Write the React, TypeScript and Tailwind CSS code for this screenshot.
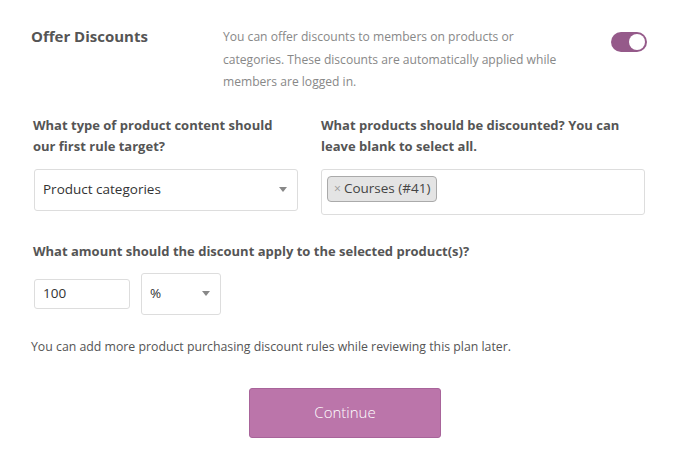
import React from 'react';

function Caret() {
  return (
    <svg width="8" height="5" viewBox="0 0 8 5" className="shrink-0">
      <path d="M0 0h8L4 5z" fill="#888" />
    </svg>
  );
}

export default function App() {
  const font = { fontFamily: '"Open Sans", "Noto Sans", sans-serif' };

  return (
    <div className="w-[698px] h-[471px] bg-white text-[#555]" style={font}>
      <div className="pl-[31px] pr-[51px] pt-[24px]">
        {/* toggle row */}
        <div className="flex items-start">
          <h2 className="w-[192px] text-[15px] font-bold leading-[22px] text-[#555] pt-[1px]">Offer Discounts</h2>
          <p className="w-[350px] text-[12.1px] leading-[22.5px] text-[#888] pt-[2px]">
            You can offer discounts to members on products or categories. These discounts are automatically applied
            while members are logged in.
          </p>
          <div className="ml-auto mt-[8px] w-[36px] h-[20px] rounded-full bg-[#955a8a] flex items-center justify-end pr-[2px]">
            <div className="w-[16px] h-[16px] rounded-full bg-white" />
          </div>
        </div>

        {/* rule target */}
        <div className="mt-[21px] grid grid-cols-[265px_324px] gap-x-[23px] pl-[2px]">
          <div>
            <p className="text-[13px] font-bold leading-[21px] text-[#555]">
              What type of product content should our first rule target?
            </p>
            <div className="mt-[12px] ml-[1px] h-[42px] border border-[#ddd] rounded-[3px] flex items-center justify-between pl-[8px] pr-[10px]">
              <span className="text-[13.5px] text-[#333]">Product categories</span>
              <Caret />
            </div>
          </div>
          <div>
            <p className="text-[13px] font-bold leading-[21px] text-[#555]">
              What products should be discounted? You can leave blank to select all.
            </p>
            <div className="mt-[12px] h-[46px] border border-[#ddd] rounded-[3px] pt-[5px] pl-[5px]">
              <span className="inline-flex items-center h-[26px] px-[6px] bg-[#e4e4e4] border border-[#aaa] rounded-[4px] text-[13.5px] text-[#444]">
                <span className="text-[#999] text-[12px] mr-[3px]">×</span>Courses (#41)
              </span>
            </div>
          </div>
        </div>

        {/* amount */}
        <p className="mt-[26px] pl-[2px] text-[13px] font-bold leading-[21px] text-[#555]">
          What amount should the discount apply to the selected product(s)?
        </p>
        <div className="mt-[11px] pl-[3px] flex items-center gap-[11px]">
          <div className="w-[96px] h-[30px] border border-[#ddd] rounded-[3px] flex items-center px-[8px] text-[13.5px] text-[#333]">
            100
          </div>
          <div className="w-[80px] h-[42px] border border-[#ddd] rounded-[3px] flex items-center justify-between pl-[8px] pr-[10px]">
            <span className="text-[13.5px] text-[#333]">%</span>
            <Caret />
          </div>
        </div>

        <p className="mt-[22px] text-[12.3px] leading-[20px] text-[#555]">
          You can add more product purchasing discount rules while reviewing this plan later.
        </p>

        <div className="mt-[31px] flex justify-center pl-[12px]">
          <button className="w-[192px] h-[50px] rounded-[3px] bg-[#bb75aa] border border-[#a8649a] text-white text-[15px] font-light">
            Continue
          </button>
        </div>
      </div>
    </div>
  );
}
